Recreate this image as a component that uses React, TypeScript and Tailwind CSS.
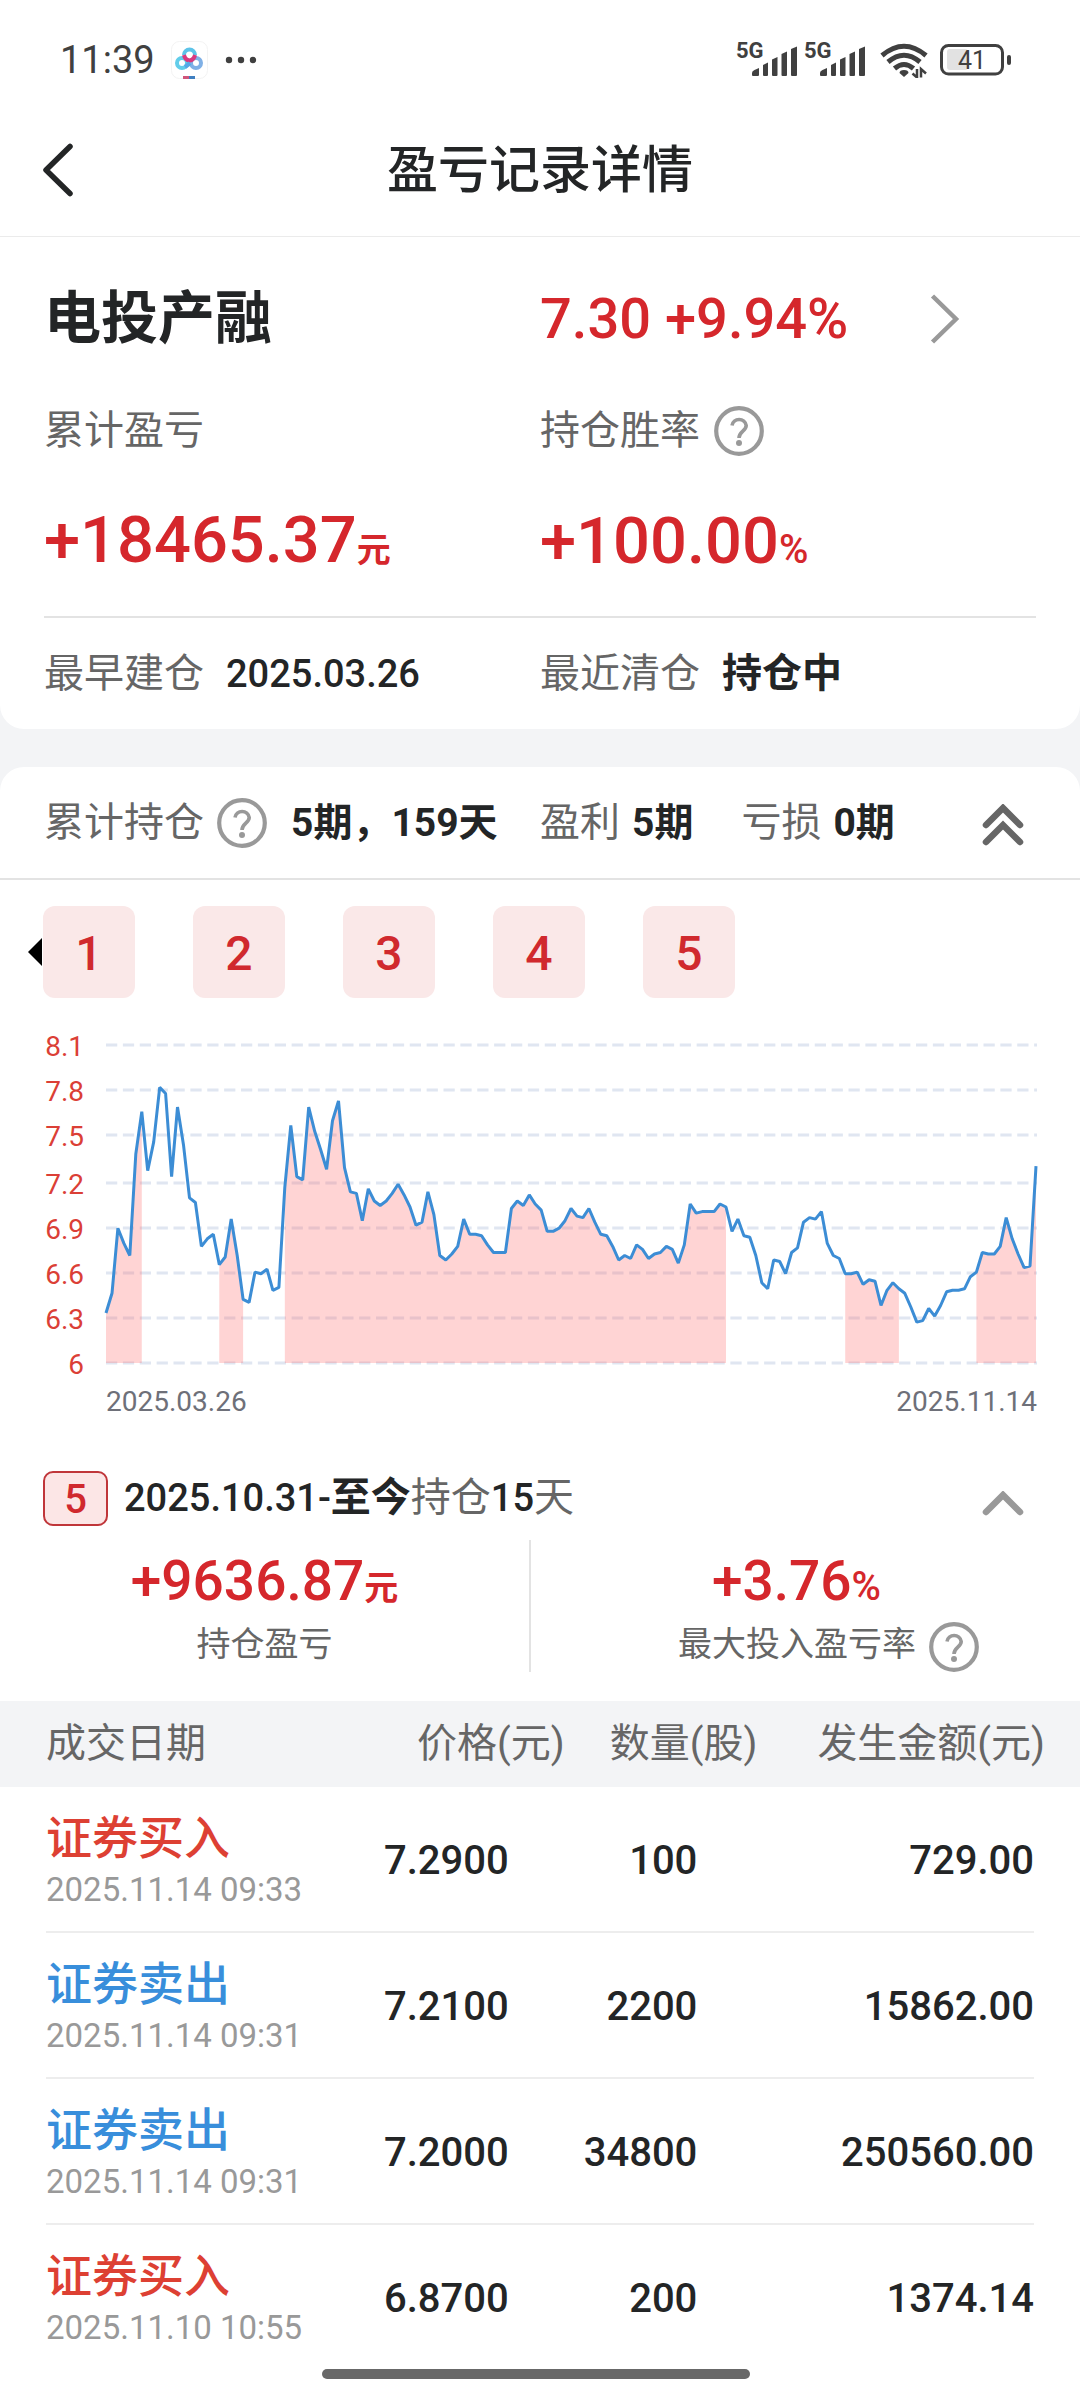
import { useState } from 'react';
import type { ReactNode } from 'react';

interface Trade {
  side: 'buy' | 'sell';
  time: string;
  price: string;
  quantity: string;
  amount: string;
}

const trades: Trade[] = [
  { side: 'buy', time: '2025.11.14 09:33', price: '7.2900', quantity: '100', amount: '729.00' },
  { side: 'sell', time: '2025.11.14 09:31', price: '7.2100', quantity: '2200', amount: '15862.00' },
  { side: 'sell', time: '2025.11.14 09:31', price: '7.2000', quantity: '34800', amount: '250560.00' },
  { side: 'buy', time: '2025.11.10 10:55', price: '6.8700', quantity: '200', amount: '1374.14' },
];

const periods = [1, 2, 3, 4, 5];

// Daily closing prices, 2025.03.26 - 2025.11.14
const prices = [
  6.33, 6.46, 6.89, 6.79, 6.71, 7.38, 7.66, 7.27, 7.46, 7.82, 7.78, 7.23, 7.69, 7.44, 7.09, 7.06,
  6.77, 6.82, 6.85, 6.65, 6.7, 6.95, 6.71, 6.42, 6.4, 6.6, 6.59, 6.62, 6.48, 6.5, 7.16, 7.57,
  7.23, 7.21, 7.69, 7.53, 7.41, 7.28, 7.6, 7.73, 7.29, 7.13, 7.12, 6.94, 7.15, 7.07, 7.04, 7.07,
  7.12, 7.18, 7.11, 7.03, 6.91, 6.93, 7.13, 6.98, 6.71, 6.68, 6.72, 6.77, 6.95, 6.85, 6.85, 6.84,
  6.78, 6.73, 6.73, 6.73, 7.02, 7.07, 7.04, 7.11, 7.05, 7.01, 6.87, 6.87, 6.89, 6.94, 7.02, 6.97,
  6.96, 7.02, 6.93, 6.85, 6.84, 6.77, 6.68, 6.71, 6.69, 6.78, 6.75, 6.69, 6.72, 6.73, 6.77, 6.75,
  6.66, 6.78, 7.05, 6.99, 7.0, 7.0, 7.0, 7.05, 7.03, 6.87, 6.95, 6.84, 6.83, 6.71, 6.53, 6.49,
  6.68, 6.67, 6.59, 6.73, 6.76, 6.93, 6.96, 6.95, 7.0, 6.79, 6.71, 6.69, 6.59, 6.59, 6.6, 6.52,
  6.55, 6.54, 6.38, 6.48, 6.53, 6.49, 6.46, 6.37, 6.27, 6.28, 6.36, 6.31, 6.38, 6.47, 6.48, 6.48,
  6.49, 6.57, 6.6, 6.73, 6.72, 6.72, 6.77, 6.96, 6.82, 6.72, 6.63, 6.64, 7.3,
];

// Index ranges of the days on which a position was held
const holdings: [number, number][] = [[0, 6], [19, 23], [30, 104], [124, 133], [146, 156]];

const ticks = [
  { label: '8.1', y: 27 },
  { label: '7.8', y: 72 },
  { label: '7.5', y: 117 },
  { label: '7.2', y: 165 },
  { label: '6.9', y: 210 },
  { label: '6.6', y: 255 },
  { label: '6.3', y: 300 },
  { label: '6', y: 345 },
];

const LEFT = 106;
const RIGHT = 1036;
const TOP = 27;
const BOTTOM = 345;

const px = (i: number) => LEFT + ((RIGHT - LEFT) * i) / (prices.length - 1);
const py = (p: number) => BOTTOM - ((p - 6) / 2.1) * (BOTTOM - TOP);
const point = (i: number) => `${px(i).toFixed(1)},${py(prices[i]).toFixed(1)}`;

function PriceChart() {
  const line = prices.map((_, i) => point(i)).join(' ');

  const area = ([from, to]: [number, number]) => {
    const pts = [];
    for (let i = from; i <= to; i++) pts.push(point(i));
    return `${px(from)},${BOTTOM} ${pts.join(' ')} ${px(to)},${BOTTOM}`;
  };

  return (
    <svg viewBox="0 0 1080 412" className="mt-5 block w-full" role="img" aria-label="股价走势">
      {ticks.map((t) => (
        <g key={t.label}>
          <line x1={LEFT} x2={RIGHT + 1} y1={t.y} y2={t.y} stroke="#e0e6f1" strokeWidth="3" strokeDasharray="11.25 5.625" />
          <text x="84" y={t.y + 11} textAnchor="end" fontSize="28" fill="#db3f36">{t.label}</text>
        </g>
      ))}
      {holdings.map((h) => (
        <polygon key={h[0]} points={area(h)} fill="#ff6464" fillOpacity="0.28" />
      ))}
      <polyline points={line} fill="none" stroke="#3c8dd5" strokeWidth="3" strokeLinejoin="bevel" />
      <text x="106" y="393" fontSize="28" fill="#6e7079">2025.03.26</text>
      <text x="1037" y="393" textAnchor="end" fontSize="28" fill="#6e7079">2025.11.14</text>
    </svg>
  );
}

function SignalIcon() {
  return (
    <svg width="64" height="56" viewBox="0 -10 64 56" fill="#404040" aria-hidden="true">
      <text x="0" y="16" fontSize="22" fontWeight="700">5G</text>
      <path d="M16 33V31Q16 29 18.500 28L23 26V33Q23 34 22 34H17Q16 34 16 33Z" />
      <path d="M27 33V23L32 20.500V33Q32 34 31 34H28Q27 34 27 33Z" />
      <path d="M36 33V17.500L41.500 15V33Q41.500 34 40.500 34H37Q36 34 36 33Z" />
      <path d="M45.500 33V12L51 9.500V33Q51 34 50 34H46.500Q45.500 34 45.500 33Z" />
      <path d="M55 33V7L61 4.500V33Q61 34 60 34H56Q55 34 55 33Z" />
    </svg>
  );
}

function WifiIcon() {
  return (
    <svg width="48" height="36" viewBox="0 0 48 36" fill="none" stroke="#404040" strokeWidth="5" aria-hidden="true">
      <path d="M2 13.500Q24-5 46 13.500" />
      <path d="M8 20Q24 6.500 40 20" />
      <path d="M14.500 26.500Q24 18.500 33.500 26.500" />
      <path d="M24 35L19.500 31Q19.500 28 24 28Q28.500 28 28.500 31Z" fill="#404040" stroke="none" />
      <path d="M37 27V35.500L32.500 31.500M41 35.500V27L46 31.500" strokeWidth="2.500" />
    </svg>
  );
}

function BatteryIcon() {
  return (
    <svg width="72" height="32" viewBox="0 0 72 32" fill="none" aria-hidden="true">
      <rect x="1.500" y="1.500" width="61" height="28.500" rx="7" stroke="#404040" strokeWidth="3" />
      <rect x="7" y="5" width="21" height="21" rx="3" fill="#e2e2e2" />
      <rect x="67" y="11" width="4" height="10" rx="2" fill="#404040" />
      <text x="32" y="25" textAnchor="middle" fontSize="25" fill="#404040">41</text>
    </svg>
  );
}

function StatusBar() {
  return (
    <div className="flex h-[104px] items-center pt-4 pr-[68px] pl-[60px] text-[#404040]">
      <span className="text-[38px] leading-none">11:39</span>
      <svg width="38" height="38" viewBox="0 0 38 38" className="ml-4" fill="none" strokeWidth="4" aria-hidden="true">
        <rect x="0.500" y="0.500" width="36" height="37" rx="8" stroke="#f3f3f3" strokeWidth="1" />
        <circle cx="11" cy="22" r="5" stroke="#62cdea" />
        <circle cx="25" cy="22" r="5" stroke="#7fb0e6" />
        <path d="M13 14a5.500 5.500 0 0 1 11 0" stroke="#5cc3e8" />
        <path d="M13 14q1 5 5.500 5.500q4.500-.5 5.500-5.500" stroke="#d8397f" />
        <path d="M14 26q3-2 5-4" stroke="#55a8e6" />
        <path d="M12 36.500h6" stroke="#d0557b" strokeWidth="3" />
        <path d="M18 36.500h6" stroke="#3f7fc0" strokeWidth="3" />
      </svg>
      <svg width="32" height="8" viewBox="0 0 32 8" className="ml-4" fill="#404040" aria-hidden="true">
        <circle cx="4" cy="4" r="3.200" />
        <circle cx="16" cy="4" r="3.200" />
        <circle cx="28" cy="4" r="3.200" />
      </svg>
      <div className="ml-auto flex items-center gap-3">
        <div className="flex gap-1">
          <SignalIcon />
          <SignalIcon />
        </div>
        <WifiIcon />
        <BatteryIcon />
      </div>
    </div>
  );
}

function HelpButton({ label }: { label: string }) {
  return (
    <button type="button" aria-label={label} className="shrink-0">
      <svg width="50" height="50" viewBox="0 0 50 50" fill="none" stroke="#999" aria-hidden="true">
        <circle cx="25" cy="25" r="22.800" strokeWidth="4.200" />
        <path d="M18 19.500a7.200 7.200 0 0 1 14.200 0c0 5.500-7.200 6-7.200 12.500" strokeWidth="3.600" />
        <circle cx="25" cy="37" r="3" fill="#999" stroke="none" />
      </svg>
    </button>
  );
}

function Amount({ value, unit, large }: { value: string; unit: string; large?: boolean }) {
  return (
    <span className="font-medium whitespace-nowrap text-[#d5272c]">
      <span className={large ? 'text-[65px]' : 'text-[55px]'}>{value}</span>
      <span className={unit === '%' ? 'text-[40px]' : 'text-[34px] font-bold'}>{unit}</span>
    </span>
  );
}

function Label({ children }: { children: ReactNode }) {
  return <span className="whitespace-nowrap text-[#666]">{children}</span>;
}

function Strong({ children }: { children: ReactNode }) {
  return <span className="text-[38px] font-medium whitespace-nowrap text-[#232526]">{children}</span>;
}

export default function App() {
  const [expanded, setExpanded] = useState(true);
  const [detailOpen, setDetailOpen] = useState(true);

  return (
    <div className="min-h-screen bg-[#f3f4f6] font-['Roboto','Noto_Sans_CJK_SC',sans-serif] text-[40px] leading-[50px] text-[#232526]">
      <div className="rounded-b-3xl bg-white">
        <StatusBar />
        <header className="grid h-[133px] grid-cols-[1fr_auto_1fr] items-center border-b border-[#ebebeb] px-[42px]">
          <button type="button" aria-label="返回" className="justify-self-start">
            <svg width="32" height="54" viewBox="0 0 32 54" fill="none" stroke="#232526" strokeWidth="5.500" strokeLinecap="round" strokeLinejoin="round" aria-hidden="true">
              <path d="M28 3.500L4 27L28 50.500" />
            </svg>
          </button>
          <h1 className="pt-[2px] text-[51px] font-medium">盈亏记录详情</h1>
        </header>

        <section className="px-11 pt-[42px]">
          <div className="grid h-20 grid-cols-2 items-center">
            <h2 className="text-[57px] font-bold">电投产融</h2>
            <a href="#quote" className="flex items-center justify-between pr-[76px] text-[56px] text-[#d5272c]">
              <span className="font-medium whitespace-nowrap">7.30 +9.94%</span>
              <svg width="30" height="50" viewBox="0 0 30 50" fill="none" stroke="#999" strokeWidth="4.500" aria-hidden="true">
                <path d="M2.500 2L26 25L2.500 48" />
              </svg>
            </a>
          </div>
          <div className="mt-[47px] grid grid-cols-2 items-center">
            <Label>累计盈亏</Label>
            <div className="flex items-center gap-[14px]">
              <Label>持仓胜率</Label>
              <HelpButton label="持仓胜率说明" />
            </div>
          </div>
          <div className="mt-11 grid h-20 grid-cols-2 items-center leading-[80px]">
            <Amount value="+18465.37" unit="元" large />
            <Amount value="+100.00" unit="%" large />
          </div>
          <div className="mt-9 grid h-[113px] grid-cols-2 items-center border-t-2 border-[#e3e3e3]">
            <div className="flex items-center gap-[22px]">
              <Label>最早建仓</Label>
              <Strong>2025.03.26</Strong>
            </div>
            <div className="flex items-center gap-[22px]">
              <Label>最近清仓</Label>
              <span className="font-bold">持仓中</span>
            </div>
          </div>
        </section>
      </div>

      <div className="mt-[38px] rounded-t-3xl bg-white">
        <div className="grid h-[113px] grid-cols-2 items-center border-b-2 border-[#e3e3e3] px-11">
          <div className="flex items-center">
            <Label>累计持仓</Label>
            <div className="ml-[13px] flex">
              <HelpButton label="累计持仓说明" />
            </div>
            <span className="ml-6 text-[39px] font-bold whitespace-nowrap">5期，159天</span>
          </div>
          <div className="flex items-center">
            <Label>盈利</Label>
            <span className="ml-3 text-[39px] font-bold whitespace-nowrap">5期</span>
            <span className="ml-12 whitespace-nowrap text-[#666]">亏损</span>
            <span className="ml-3 text-[39px] font-bold whitespace-nowrap">0期</span>
            <button type="button" aria-label="收起" aria-expanded={expanded} onClick={() => setExpanded(!expanded)} className="mr-3 ml-auto pt-1">
              <svg width="42" height="42" viewBox="0 0 42 42" fill="none" stroke="#666" strokeWidth="6.500" strokeLinecap="round" aria-hidden="true">
                <path d="M4 21L21 4L38 21M4 38L21 21L38 38" />
              </svg>
            </button>
          </div>
        </div>

        {expanded && (
          <>
            <div className="mt-[26px] flex items-center pl-7">
              <svg width="14" height="28" viewBox="0 0 14 28" aria-hidden="true">
                <path d="M14 0V28L0 14Z" />
              </svg>
              <div className="ml-px flex gap-[58px]">
                {periods.map((n) => (
                  <button key={n} type="button" className="size-[92px] rounded-xl bg-[#fae8e8] pt-1 text-5xl font-medium text-[#d0292e]">
                    {n}
                  </button>
                ))}
              </div>
            </div>
            <PriceChart />
          </>
        )}

        <div className="mt-[38px] flex h-15 items-center pr-14 pl-[43px]">
          <span className="flex h-[55px] w-[65px] items-center justify-center rounded-[10px] border-2 border-[#c0363a] bg-[#fce6e6] pt-1 font-medium text-[#d0292e]">
            5
          </span>
          <p className="ml-4 whitespace-nowrap text-[#666]">
            <Strong>2025.10.31-</Strong>
            <span className="font-bold text-[#232526]">至今</span>
            持仓<Strong>15</Strong>天
          </p>
          <button type="button" aria-label="收起明细" aria-expanded={detailOpen} onClick={() => setDetailOpen(!detailOpen)} className="ml-auto pt-3">
            <svg width="42" height="26" viewBox="0 0 42 26" fill="none" stroke="#999" strokeWidth="6.500" strokeLinecap="round" aria-hidden="true">
              <path d="M4 21L21 4L38 21" />
            </svg>
          </button>
        </div>

        {detailOpen && (
          <>
            <div className="mt-3 grid grid-cols-2 pr-[18px] text-[34px] leading-[44px]">
              <div className="flex flex-col items-center border-r-2 border-[#e3e3e3] pt-[9px]">
                <div className="h-16 leading-[64px]">
                  <Amount value="+9636.87" unit="元" />
                </div>
                <div className="mt-[9px]">
                  <Label>持仓盈亏</Label>
                </div>
              </div>
              <div className="flex flex-col items-center pt-[9px]">
                <div className="h-16 leading-[64px]">
                  <Amount value="+3.76" unit="%" />
                </div>
                <div className="mt-[9px] flex items-start gap-[13px] pl-16">
                  <Label>最大投入盈亏率</Label>
                  <HelpButton label="最大投入盈亏率说明" />
                </div>
              </div>
            </div>

            <div className="mt-[29px] px-[46px]">
              <table className="w-full table-fixed border-separate border-spacing-0">
                <thead className="bg-[#f3f4f6] text-[#666]">
                  <tr className="h-[86px] text-right whitespace-nowrap">
                    <th className="w-[30%] text-left font-normal shadow-[-46px_0_0_#f3f4f6]">成交日期</th>
                    <th className="w-[22.5%] font-normal">价格(元)</th>
                    <th className="w-[19.5%] font-normal">数量(股)</th>
                    <th className="font-normal shadow-[46px_0_0_#f3f4f6]">
                      <div className="-mr-[11px]">发生金额(元)</div>
                    </th>
                  </tr>
                </thead>
                <tbody className="[&>tr:last-child>td]:border-b-0">
                  {trades.map((t, i) => (
                    <tr key={i} className="text-right font-medium [&>td]:border-b-2 [&>td]:border-[#ededed]">
                      <td className="pt-[25px] pb-[15px] text-left leading-[52px] whitespace-nowrap">
                        <div className={t.side === 'buy' ? 'text-[46px] text-[#dd4033]' : 'text-[46px] text-[#388edb]'}>
                          {t.side === 'buy' ? '证券买入' : '证券卖出'}
                        </div>
                        <div className="text-[33px] font-normal text-[#999]">{t.time}</div>
                      </td>
                      <td className="pt-1 pr-14">{t.price}</td>
                      <td className="pt-1 pr-15">{t.quantity}</td>
                      <td className="pt-1">{t.amount}</td>
                    </tr>
                  ))}
                </tbody>
              </table>
            </div>
          </>
        )}

        <div className="flex justify-center pr-2 pb-[21px]">
          <div className="h-[10px] w-[428px] rounded-full bg-[#686868]" />
        </div>
      </div>
    </div>
  );
}
